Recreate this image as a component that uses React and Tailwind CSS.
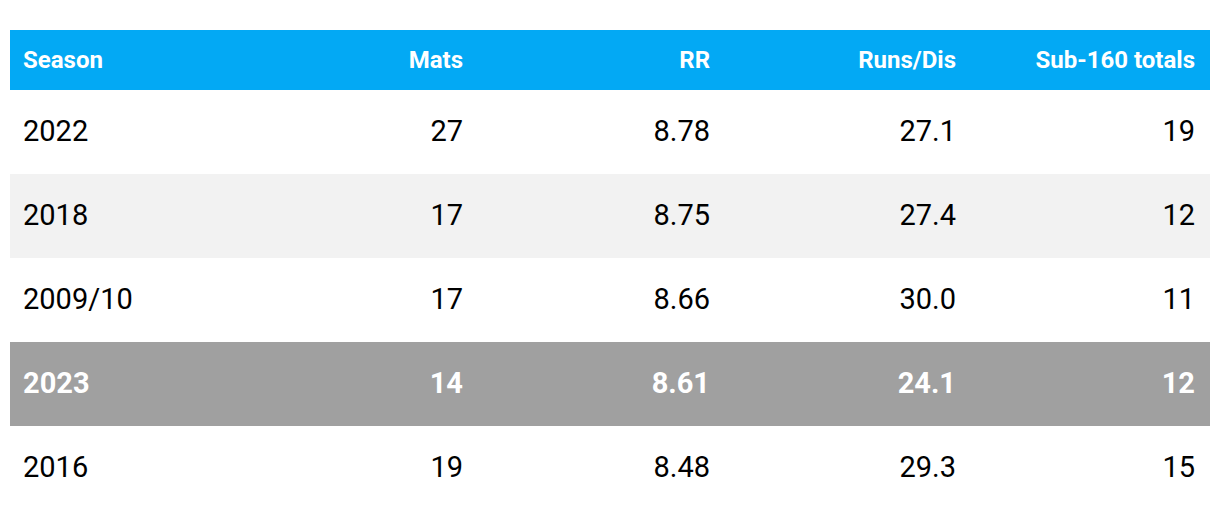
import React from "react";

const rows = [
  { season: "2022", mats: "27", rr: "8.78", rd: "27.1", sub: "19" },
  { season: "2018", mats: "17", rr: "8.75", rd: "27.4", sub: "12" },
  { season: "2009/10", mats: "17", rr: "8.66", rd: "30.0", sub: "11" },
  { season: "2023", mats: "14", rr: "8.61", rd: "24.1", sub: "12", highlight: true },
  { season: "2016", mats: "19", rr: "8.48", rd: "29.3", sub: "15" },
];

const cols = "grid grid-cols-[194px_246px_247px_246px_239px]";

const App = () => {
  return (
    <div className="w-[1220px] h-[520px] bg-white pt-[30px] px-[10px] font-['Roboto',sans-serif]">
      <div className={`${cols} h-[60px] items-center bg-[#03a9f4] text-white font-bold text-[24px] pl-[13px] pr-[14px]`}>
        <div>Season</div>
        <div className="text-right">Mats</div>
        <div className="text-right">RR</div>
        <div className="text-right">Runs/Dis</div>
        <div className="text-right">Sub-160 totals</div>
      </div>
      {rows.map((r, i) => (
        <div
          key={r.season}
          className={`${cols} h-[84px] items-center pl-[13px] pr-[14px] text-[29px] ${
            r.highlight
              ? "bg-[#a0a0a0] text-white font-bold"
              : i % 2 === 1
              ? "bg-[#f2f2f2] text-black"
              : "bg-white text-black"
          }`}
        >
          <div>{r.season}</div>
          <div className="text-right">{r.mats}</div>
          <div className="text-right">{r.rr}</div>
          <div className="text-right">{r.rd}</div>
          <div className="text-right">{r.sub}</div>
        </div>
      ))}
    </div>
  );
};

export default App;
